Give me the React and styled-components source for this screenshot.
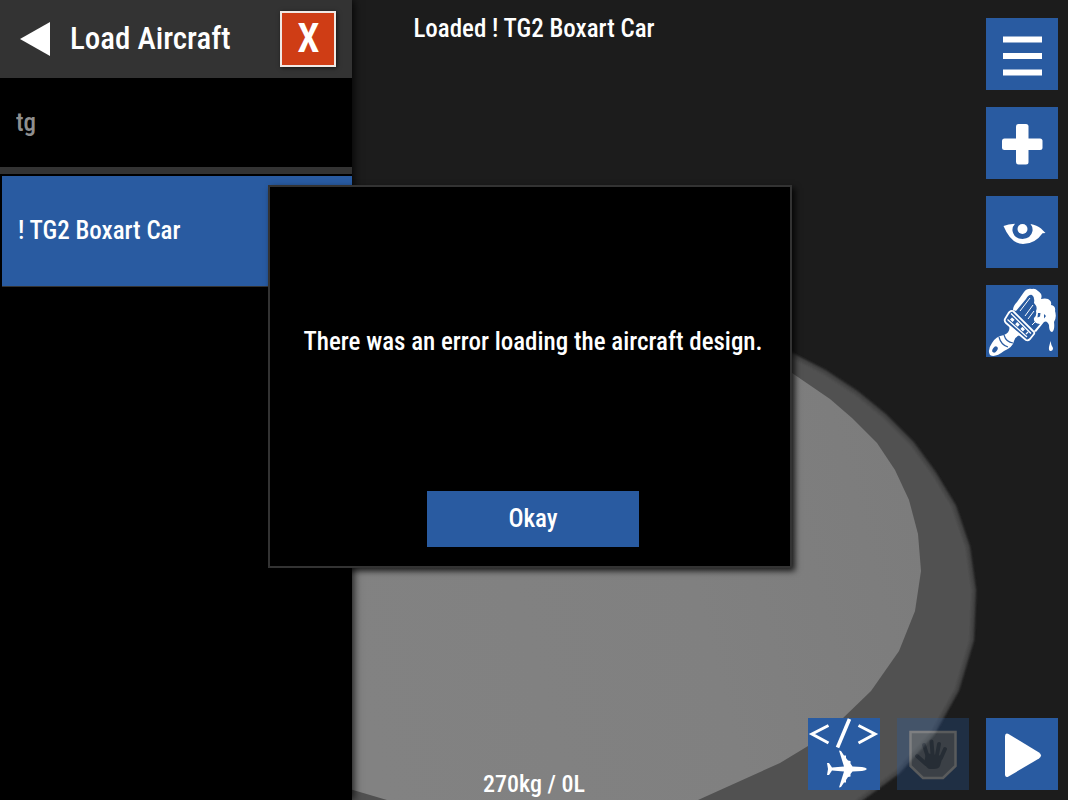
import React, { useState } from 'react';
import styled, { createGlobalStyle } from 'styled-components';

const GlobalStyle = createGlobalStyle`
  * {
    box-sizing: border-box;
  }

  body {
    margin: 0;
    background-color: #1c1c1c;
    color: white;
  }

  body, button, input {
    font-family: 'Roboto Condensed', 'Liberation Sans Narrow', 'Roboto', sans-serif;
    font-size: 25px;
    font-weight: 500;
    line-height: 32px;
  }
`;

const Screen = styled.div`
  position: relative;
  display: flex;
  justify-content: space-between;
  min-height: 100vh;
  overflow: hidden;
`;

const Backdrop = styled.svg`
  position: absolute;
  inset: 0;
  width: 100%;
  height: 100%;
`;

const SidePanel = styled.aside`
  position: relative;
  width: 33%;
  background-color: black;
  box-shadow: 2px 0 8px rgba(0, 0, 0, 0.8);
`;

const PanelHeader = styled.header`
  display: flex;
  align-items: center;
  gap: 20px;
  height: 78px;
  padding: 0 16px 0 20px;
  background-color: #333333;
`;

const BackButton = styled.button`
  display: flex;
  padding: 0;
  border: none;
  background: none;
  cursor: pointer;
`;

const PanelTitle = styled.h1`
  flex: 1;
  margin: 0;
  font-size: 31px;
  font-weight: 500;
  line-height: 40px;
  white-space: nowrap;
`;

const CloseButton = styled.button`
  width: 56px;
  height: 56px;
  padding: 0;
  border: 2px solid #f0e8e4;
  background-color: #cf3d15;
  box-shadow: 1px 1px 4px rgba(0, 0, 0, 0.6);
  color: white;
  font-size: 40px;
  font-weight: 600;
  line-height: 48px;
  cursor: pointer;
`;

const SearchInput = styled.input`
  display: block;
  width: 100%;
  height: 96px;
  padding: 0 16px;
  border: none;
  border-bottom: 7px solid #333333;
  background-color: black;
  color: #8f8f8f;
  outline: none;
`;

const DesignList = styled.ul`
  margin: 0;
  padding: 2px 0 0 2px;
  list-style: none;
`;

const DesignButton = styled.button`
  width: 100%;
  height: 111px;
  padding: 0 16px;
  border: none;
  border-bottom: 1px solid #333333;
  background-color: #295ba1;
  color: white;
  text-align: left;
  cursor: pointer;
`;

const Hud = styled.div`
  position: absolute;
  inset: 0;
  display: flex;
  flex-direction: column;
  align-items: center;
  justify-content: space-between;
  padding: 13px 0 0;
  pointer-events: none;
`;

const HudWeight = styled.span`
  font-size: 24px;
`;

const Controls = styled.div`
  position: relative;
  display: flex;
  flex-direction: column;
  align-items: flex-end;
  justify-content: space-between;
  padding: 18px 10px 10px;
`;

const ToolGroup = styled.div`
  display: flex;
  flex-direction: ${(props) => (props.$row ? 'row' : 'column')};
  gap: 17px;
`;

const ToolButton = styled.button`
  width: 72px;
  height: 72px;
  padding: 0;
  border: none;
  background-color: #295ba1;
  opacity: ${(props) => (props.disabled ? 0.3 : 1)};
  cursor: pointer;

  svg {
    display: block;
  }
`;

const DialogLayer = styled.div`
  position: absolute;
  inset: 0;
  display: flex;
  align-items: center;
  justify-content: center;
  padding: 0 8px 48px 0;
`;

const Dialog = styled.div`
  display: flex;
  flex-direction: column;
  align-items: center;
  width: 49%;
  min-width: 524px;
  padding: 0 16px 19px 22px;
  border: 2px solid #333333;
  background-color: black;
  box-shadow: 3px 3px 6px rgba(0, 0, 0, 0.8);
`;

const DialogMessage = styled.p`
  margin: 0;
  padding: 139px 0 133px;
  white-space: nowrap;
`;

const OkayButton = styled.button`
  width: 212px;
  height: 56px;
  padding: 0;
  border: none;
  background-color: #295ba1;
  color: white;
  cursor: pointer;
`;

const Scene = () => (
  <Backdrop viewBox="0 0 1068 800" preserveAspectRatio="xMidYMid slice" aria-hidden="true">
    <defs>
      <linearGradient id="top" x1="0" y1="0.6" x2="1" y2="0.4">
        <stop offset="0" stopColor="#828282" />
        <stop offset="0.6" stopColor="#808080" />
        <stop offset="1" stopColor="#7c7c7c" />
      </linearGradient>
      <filter id="soft">
        <feGaussianBlur stdDeviation="1.2" />
      </filter>
    </defs>
    <path
      fill="#515151"
      stroke="#444444"
      strokeWidth="4"
      filter="url(#soft)"
      d="M340 340H765L792 355L825 372L857 393L885 416L912 443L934 473L954 506L968 547L974 590L972 640L957 690L933 733L898 772L860 800L840 820H340Z"
    />
    <path
      fill="url(#top)"
      d="M340 350H750L792 373L830 399L852 418L877 443L895 470L909 500L918 534L921 571L915 611L899 651L871 691L842 719L808 746L780 763L698 800H387L353 790L340 786Z"
    />
  </Backdrop>
);

const Icon = ({ children }) => (
  <svg width="72" height="72" viewBox="0 0 72 72" fill="white" aria-hidden="true">
    {children}
  </svg>
);

const MenuIcon = () => (
  <Icon>
    <path d="M17 18.500h39v6H17zM17 35h39v6H17zM17 51.500h39v6H17z" />
  </Icon>
);

const PlusIcon = () => (
  <Icon>
    <rect x="30" y="17" width="12.500" height="40.500" rx="2.500" />
    <rect x="16" y="31.500" width="40.500" height="11.500" rx="2.500" />
  </Icon>
);

const EyeIcon = () => (
  <Icon>
    <path d="M17.500 30Q22 28 29 27.800Q26 31 26.500 35Q28 42.500 36.500 43Q45 42.500 46.500 35Q47 31 44.500 28Q51 29 55 32.500L59.500 37L56.500 37.200Q49 48 37 48Q25 48 17.500 30Z" />
    <circle cx="36.500" cy="33" r="5" />
  </Icon>
);

const BrushIcon = () => (
  <Icon>
    <path d="M27 25Q27 21 31 17L38 7Q41 3 46 4Q49 3 52 6Q57 9 55 14Q59 13 62 14Q66 16 65 20Q70 21 69 26Q71 32 68 37Q69 45 66 47Q63 47 63 40Q61 35 58 37L50 47L48 46L54 39Q47 38 48 33Q51 31 50 26Q52 22 48 18Q49 12 46 10Q43 9 40 14L30 26Z" />
    <path fill="none" stroke="white" strokeWidth="1" d="M34 26L44 13M39 31L47 20M42 34L48 26M46 40L50 36" />
    <path fill="#295ba1" d="M52 28l2.500 0l-.5 3.500l-2.500 1zM58 29l2 2l-2 2.500z" />
    <path d="M64.500 56Q65 60 67 63Q67 66 64.500 66Q62.500 66 63 62Z" />
    <path
      fill="#295ba1"
      stroke="white"
      strokeWidth="1.800"
      strokeLinejoin="round"
      d="M27 26Q24 25 22 29L19 34Q18 36 20 38L40 55Q42 56 44 54L48 49Q49 47 47 46Z"
    />
    <path fill="none" stroke="white" strokeWidth="1.300" d="M25 28.500L45 48.500M21.500 34.500L41 52" />
    <path fill="none" stroke="white" strokeWidth="3" strokeDasharray="3.500 3.500" d="M25 33.500L41.500 48.500" />
    <path d="M23 40L35 50Q29 51 28 56Q27 62 18 66Q9 73 4 70Q1 65 6 58Q10 51 18 50Q25 47 23 40Z" />
    <path fill="none" stroke="#295ba1" strokeWidth="1.200" d="M18 50Q20 57 27 58M13 52Q15 60 22 62" />
    <ellipse cx="9" cy="64.500" rx="2.200" ry="3.500" fill="#295ba1" transform="rotate(35 9 64.500)" />
  </Icon>
);

const CodePlaneIcon = () => (
  <Icon>
    <path fill="none" stroke="white" strokeWidth="3" d="M20.500 7.500L4 16L20.500 25M50.500 7.500L67 16L50.500 25" />
    <path fill="none" stroke="white" strokeWidth="3.600" d="M41.500 1L29.500 29.500" />
    <path d="M31 32.500L33 33L36 37.500L38 37.500L38 40L40 42.500L42.500 43L42.500 45.500L44.500 48.500L54 49Q58 49.500 59 51Q58 52.500 54 53L44.500 53.500L42.500 56L42.500 58.500L40 59L38 62L38 64.500L36 64.500L33 69L31 69.500L36 53.500L24 52.500L21 57L19 57L20 51L19 45L21 45L24 49.500L36 48.500Z" />
  </Icon>
);

const StopIcon = () => (
  <Icon>
    <path fill="#8395a6" stroke="#e6ebf0" strokeWidth="2.500" d="M13.500 14H58.500V48L46 60H26L13.500 48Z" />
    <path
      fill="none"
      stroke="#405670"
      strokeWidth="4"
      strokeLinecap="round"
      d="M30.500 38L27 27M35.500 36L34.500 23.500M40 37L42 26M44 40L48 31M29 46L20 38"
    />
    <path fill="#405670" d="M29 35L46 38L43 48Q42 51 37 51H33Q30 51 27 45Z" />
  </Icon>
);

const PlayIcon = () => (
  <Icon>
    <path d="M19 18Q19.500 14.500 22.500 16L53 34.500Q57 37.500 53 40.500L22.500 58.500Q19.500 60 19 57Z" />
  </Icon>
);

const App = () => {
  const [search, setSearch] = useState('tg');
  const [showError, setShowError] = useState(true);

  return (
    <Screen>
      <GlobalStyle />
      <Scene />
      <Hud>
        <span>Loaded ! TG2 Boxart Car</span>
        <HudWeight>270kg / 0L</HudWeight>
      </Hud>

      <SidePanel>
        <PanelHeader>
          <BackButton aria-label="Back">
            <svg width="30" height="34" viewBox="0 0 30 34" fill="white">
              <path d="M30 0V34L0 17Z" />
            </svg>
          </BackButton>
          <PanelTitle>Load Aircraft</PanelTitle>
          <CloseButton>X</CloseButton>
        </PanelHeader>
        <SearchInput
          type="text"
          aria-label="Search designs"
          value={search}
          onChange={(e) => setSearch(e.target.value)}
        />
        <DesignList>
          <li>
            <DesignButton>! TG2 Boxart Car</DesignButton>
          </li>
        </DesignList>
      </SidePanel>

      <Controls>
        <ToolGroup>
          <ToolButton aria-label="Menu"><MenuIcon /></ToolButton>
          <ToolButton aria-label="Add part"><PlusIcon /></ToolButton>
          <ToolButton aria-label="View"><EyeIcon /></ToolButton>
          <ToolButton aria-label="Paint"><BrushIcon /></ToolButton>
        </ToolGroup>
        <ToolGroup $row>
          <ToolButton aria-label="Edit aircraft code"><CodePlaneIcon /></ToolButton>
          <ToolButton aria-label="Stop" disabled><StopIcon /></ToolButton>
          <ToolButton aria-label="Play"><PlayIcon /></ToolButton>
        </ToolGroup>
      </Controls>

      {showError && (
        <DialogLayer>
          <Dialog role="alertdialog" aria-labelledby="error-message">
            <DialogMessage id="error-message">
              There was an error loading the aircraft design.
            </DialogMessage>
            <OkayButton onClick={() => setShowError(false)}>Okay</OkayButton>
          </Dialog>
        </DialogLayer>
      )}
    </Screen>
  );
};

export default App;
